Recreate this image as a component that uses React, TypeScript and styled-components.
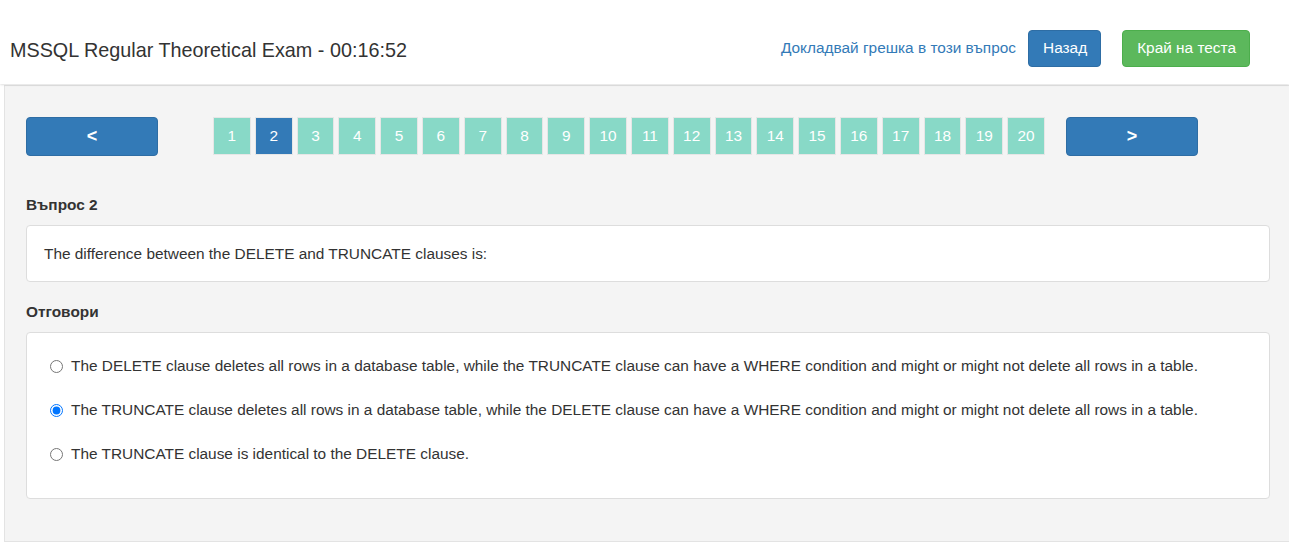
import React from "react";
import styled, { createGlobalStyle } from "styled-components";

const Global = createGlobalStyle`
  html, body { margin: 0; padding: 0; background: #fff; }
  body { font-family: "Liberation Sans", Arial, sans-serif; font-size: 15.4px; color: #333; }
  * { box-sizing: border-box; }
`;

const Header = styled.header`
  height: 84px;
  display: flex;
  align-items: center;
  justify-content: space-between;
  padding: 14px 39px 0 10px;
  background: #fff;
  box-shadow: 0 1px 2px rgba(0, 0, 0, 0.12);
  position: relative;
  z-index: 1;
`;

const Title = styled.h1`
  margin: 0;
  font-size: 19.8px;
  font-weight: normal;
  color: #333;
  padding-top: 2px;
`;

const Actions = styled.div`
  display: flex;
  align-items: center;
  margin-top: -2px;
`;

const ReportLink = styled.a`
  color: #337ab7;
  text-decoration: none;
  font-size: 15.4px;
  margin-right: 12px;
  cursor: pointer;
`;

const Btn = styled.button<{ $variant: "primary" | "success" }>`
  height: 37px;
  padding: 0 13px 0 14px;
  border-radius: 4px;
  font-family: inherit;
  font-size: 15.4px;
  color: #fff;
  cursor: pointer;
  background: ${(p) => (p.$variant === "primary" ? "#337ab7" : "#5cb85c")};
  border: 1px solid ${(p) => (p.$variant === "primary" ? "#2e6da4" : "#4cae4c")};
  & + & { margin-left: 21px; }
`;

const Panel = styled.main`
  margin-left: 4px;
  margin-top: 1px;
  background: #f4f4f4;
  border: 1px solid #e3e3e3;
  border-right: none;
  padding: 31px 19px 42px 21px;
`;

const Pager = styled.nav`
  display: flex;
  align-items: center;
`;

const ArrowBtn = styled.button`
  width: 132px;
  height: 39px;
  background: #337ab7;
  border: 1px solid #2e6da4;
  border-radius: 4px;
  color: #fff;
  font-family: inherit;
  font-size: 18px;
  font-weight: bold;
  cursor: pointer;
`;

const Pages = styled.div`
  display: flex;
  gap: 4px;
  margin: 0 21px 1px 55px;
`;

const PageBox = styled.div<{ $active?: boolean }>`
  width: 37.8px;
  height: 38px;
  display: flex;
  align-items: center;
  justify-content: center;
  border: 1px solid #e6e6e6;
  background: ${(p) => (p.$active ? "#337ab7" : "#88d9c7")};
  color: #fff;
  font-size: 15.4px;
`;

const Label = styled.div<{ $top: number }>`
  margin-top: ${(p) => p.$top}px;
  font-weight: bold;
  font-size: 15.4px;
  line-height: 22px;
  color: #333;
`;

const Card = styled.div`
  margin-top: 9px;
  background: #fff;
  border: 1px solid #ddd;
  border-radius: 4px;
`;

const QuestionText = styled.div`
  padding: 17px 17px 16px;
  line-height: 22px;
`;

const Answers = styled.div`
  padding: 22px 22px 33px 23px;
  display: flex;
  flex-direction: column;
  gap: 22px;
`;

const AnswerRow = styled.label`
  display: flex;
  align-items: center;
  height: 22px;
  line-height: 22px;
  cursor: pointer;
`;

const Radio = styled.input`
  width: 13px;
  height: 13px;
  margin: 0 8px 0 0;
`;

const answers = [
  "The DELETE clause deletes all rows in a database table, while the TRUNCATE clause can have a WHERE condition and might or might not delete all rows in a table.",
  "The TRUNCATE clause deletes all rows in a database table, while the DELETE clause can have a WHERE condition and might or might not delete all rows in a table.",
  "The TRUNCATE clause is identical to the DELETE clause.",
];

export default function App() {
  const [selected, setSelected] = React.useState(1);
  return (
    <>
      <Global />
      <Header>
        <Title>MSSQL Regular Theoretical Exam - 00:16:52</Title>
        <Actions>
          <ReportLink>Докладвай грешка в този въпрос</ReportLink>
          <Btn $variant="primary">Назад</Btn>
          <Btn $variant="success">Край на теста</Btn>
        </Actions>
      </Header>
      <Panel>
        <Pager>
          <ArrowBtn>&lt;</ArrowBtn>
          <Pages>
            {Array.from({ length: 20 }, (_, i) => (
              <PageBox key={i} $active={i === 1}>
                {i + 1}
              </PageBox>
            ))}
          </Pages>
          <ArrowBtn>&gt;</ArrowBtn>
        </Pager>
        <Label $top={38}>Въпрос 2</Label>
        <Card>
          <QuestionText>The difference between the DELETE and TRUNCATE clauses is:</QuestionText>
        </Card>
        <Label $top={19}>Отговори</Label>
        <Card>
          <Answers>
            {answers.map((a, i) => (
              <AnswerRow key={i}>
                <Radio
                  type="radio"
                  name="answer"
                  checked={selected === i}
                  onChange={() => setSelected(i)}
                />
                {a}
              </AnswerRow>
            ))}
          </Answers>
        </Card>
      </Panel>
    </>
  );
}
